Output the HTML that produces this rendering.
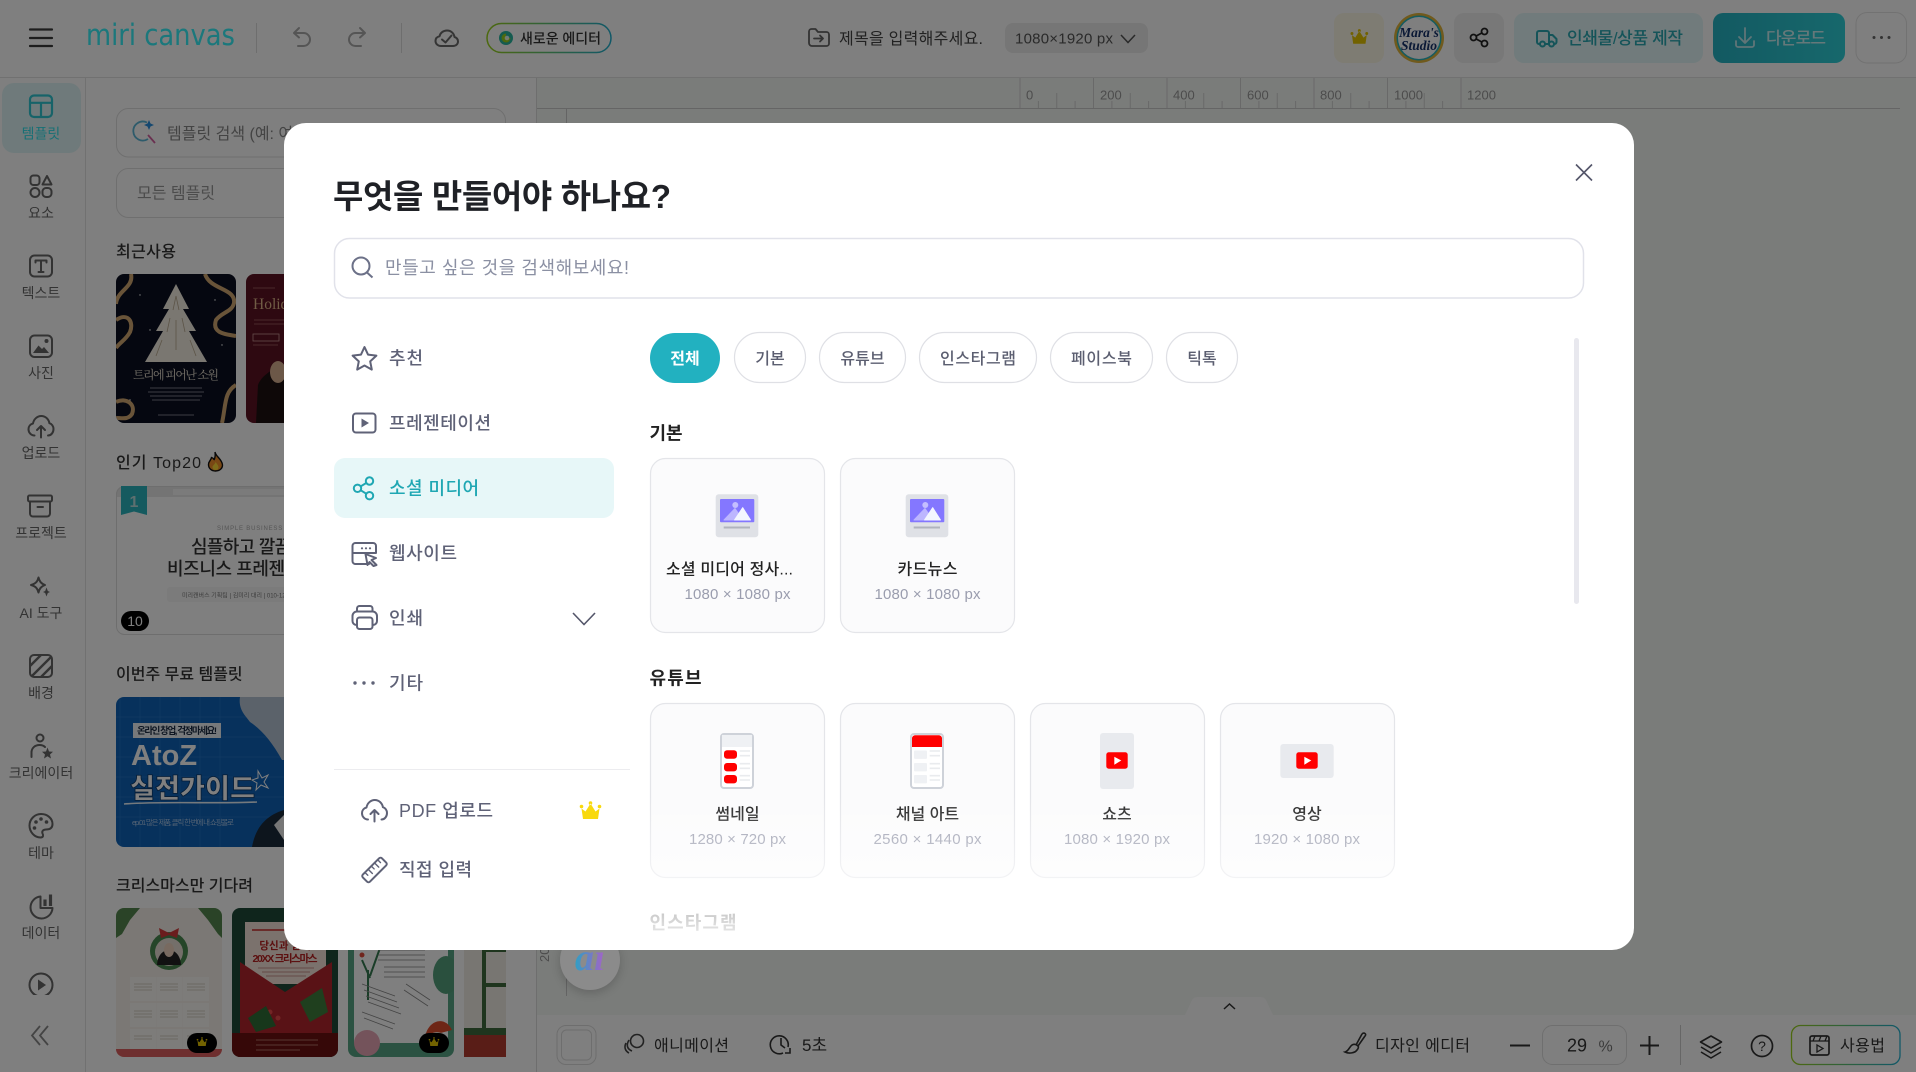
<!DOCTYPE html>
<html lang="ko"><head><meta charset="utf-8"><title>Miri Canvas</title>
<style>
html,body{margin:0;padding:0;background:#808080;overflow:hidden;width:1916px;height:1072px}
svg{display:block}
text{font-family:"Liberation Sans","Noto Sans CJK KR",sans-serif;white-space:pre}
.sl{font-size:14px;fill:#666;text-anchor:middle}
.h{font-size:16px;fill:#333;font-weight:500}
.ic{fill:none;stroke:#666;stroke-width:2;stroke-linecap:round;stroke-linejoin:round}
.m{font-size:18px;fill:#5f6277;font-weight:500}
.mi{fill:none;stroke:#5f6277;stroke-width:2;stroke-linecap:round;stroke-linejoin:round}
.tab{font-size:16px;fill:#5b5e70;text-anchor:middle;font-weight:500}
.sec{font-size:18px;fill:#222;font-weight:700}
.ct{font-size:16px;fill:#222;text-anchor:middle;font-weight:500}
.cs{font-size:15px;fill:#9a9dae;text-anchor:middle}
.card{fill:#fbfbfc;stroke:#e4e5e9;stroke-width:1.2}
.r{font-size:13px;fill:#999}
</style></head><body>
<svg xmlns="http://www.w3.org/2000/svg" width="1916" height="1072" viewBox="0 0 1916 1072">
<defs>
<linearGradient id="gPill" x1="0" x2="1" y1="0" y2="0"><stop offset="0" stop-color="#9ad21e"/><stop offset="1" stop-color="#22b1d0"/></linearGradient>
<linearGradient id="gDl" x1="0" x2="1" y1="0" y2="0"><stop offset="0" stop-color="#26b4c4"/><stop offset="1" stop-color="#2ed0d8"/></linearGradient>
<linearGradient id="gAi" x1="0" x2="1" y1="0" y2="0"><stop offset="0" stop-color="#2f9fc4"/><stop offset="1" stop-color="#a860c8"/></linearGradient>
<linearGradient id="gFade" x1="0" x2="0" y1="0" y2="1"><stop offset="0" stop-color="#fff" stop-opacity="0"/><stop offset=".85" stop-color="#fff" stop-opacity=".85"/><stop offset="1" stop-color="#fff" stop-opacity=".95"/></linearGradient>
<filter id="blurS" x="-30%" y="-30%" width="160%" height="160%"><feGaussianBlur stdDeviation="5"/></filter>
<path id="cloud" d="M6 20.500C2.500 20.500 0 17.500 0 14.200C0 11.300 1.900 9.100 4.500 8.500C5.200 4.300 8.600 1 12.800 1C17 1 20.300 4.200 20.900 8.200C23.300 8.800 25 11.200 25 14C25 17.500 22.700 20.500 19.500 20.500M12.500 22.500V11M8.500 15L12.500 11L16.500 15"/>
<path id="crown" d="M3 7.500L7 10.500L12 2.500L17 10.500L21 7.500L19.500 18H4.500Z M3 5.500m-1.800 0a1.800 1.800 0 1 0 3.600 0a1.800 1.800 0 1 0-3.600 0 M12 2m-1.800 0a1.800 1.800 0 1 0 3.600 0a1.800 1.800 0 1 0-3.600 0 M21 5.500m-1.800 0a1.800 1.800 0 1 0 3.600 0a1.800 1.800 0 1 0-3.600 0"/>
<clipPath id="cT1"><rect x="116" y="274" width="120" height="149" rx="8"/></clipPath>
<clipPath id="cT2"><rect x="246" y="274" width="120" height="149" rx="8"/></clipPath>
<clipPath id="cT3"><rect x="116" y="486" width="300" height="149" rx="8"/></clipPath>
<clipPath id="cT4"><rect x="116" y="697" width="200" height="150" rx="8"/></clipPath>
<clipPath id="cX1"><rect x="116" y="908" width="106" height="149" rx="8"/></clipPath>
<clipPath id="cX2"><rect x="232" y="908" width="106" height="149" rx="8"/></clipPath>
<clipPath id="cX3"><rect x="348" y="908" width="106" height="149" rx="8"/></clipPath>
<clipPath id="cX4"><rect x="464" y="908" width="42" height="149" rx="0"/></clipPath>
<clipPath id="cHat"><rect x="30" y="655" width="22" height="22" rx="4"/></clipPath>
<clipPath id="cSide"><rect x="0" y="78" width="85" height="917"/></clipPath>
<clipPath id="cAi"><rect x="540" y="950" width="120" height="60"/></clipPath>
</defs>

<!-- ===== base ===== -->
<rect width="1916" height="1072" fill="#fff"/>
<rect x="537" y="78" width="1379" height="937" fill="#f5f8f5"/>
<rect x="566" y="108" width="1" height="888" fill="#c8c8c8"/>
<rect y="77" width="1916" height="1" fill="#e2e2e2"/>
<rect x="85" y="78" width="1" height="994" fill="#e2e2e2"/>
<rect x="536" y="78" width="1" height="994" fill="#dcdcdc"/>

<!-- top bar -->
<path d="M30 29.500H52M30 38H52M30 46H52" stroke="#3a3a3a" stroke-width="2.200" stroke-linecap="round" fill="none"/>
<text x="86" y="45" font-size="29" fill="#36f0f8" textLength="149" lengthAdjust="spacingAndGlyphs" style="font-family:'DejaVu Sans',sans-serif;font-weight:400">miri canvas</text>
<rect x="256" y="23" width="1" height="30" fill="#ddd"/>
<path d="M299 28L294 33L299 37.500M294 33H303.500A6.500 6.500 0 0 1 303.500 46H298" fill="none" stroke="#aaa" stroke-width="2" stroke-linecap="round" stroke-linejoin="round"/>
<path d="M360 28L365 33L360 37.500M365 33H355.500A6.500 6.500 0 0 0 355.500 46H361" fill="none" stroke="#aaa" stroke-width="2" stroke-linecap="round" stroke-linejoin="round"/>
<rect x="401" y="23" width="1" height="30" fill="#ddd"/>
<path d="M441 46C437.500 46 435.500 43.500 435.500 41C435.500 38.500 437 36.800 439.500 36.300C440.300 32.800 443.300 30.500 447 30.500C451.200 30.500 454 33.500 454.500 37C456.700 37.700 458 39.200 458 41.500C458 44 456 46 453 46ZM442 39.500L445.500 42.500L451.500 35.500" fill="none" stroke="#6a6a6a" stroke-width="2" stroke-linejoin="round" stroke-linecap="round"/>
<rect x="487" y="23.500" width="124" height="29" rx="14.500" fill="#fff" stroke="url(#gPill)" stroke-width="1.500"/>
<circle cx="506" cy="38" r="7" fill="#2ab7a0"/><path d="M506 33.500A4.500 4.500 0 1 0 510.500 38L506 38Z" fill="#9ad21e"/><circle cx="507" cy="38" r="2.300" fill="#fff" opacity=".85"/>
<text x="520" y="43.500" font-size="14" fill="#333" font-weight="500" textLength="81">새로운 에디터</text>
<path d="M809 43V31.500A2.500 2.500 0 0 1 811.500 29H815.500L818 32H826.500A2.500 2.500 0 0 1 829 34.500V43.500A2.500 2.500 0 0 1 826.500 46H812A3 3 0 0 1 809 43ZM814 38.500H823M820 35.500L823 38.500L820 41.500" fill="none" stroke="#666" stroke-width="1.800" stroke-linecap="round" stroke-linejoin="round"/>
<text x="839" y="44" font-size="16" fill="#444" textLength="144">제목을 입력해주세요.</text>
<rect x="1005" y="23" width="143" height="30" rx="8" fill="#ececec"/>
<text x="1015" y="43.500" font-size="15" fill="#555" textLength="98">1080×1920 px</text>
<path d="M1121 35L1128 42.500L1135 35" fill="none" stroke="#555" stroke-width="1.500"/>
<rect x="1334" y="13" width="50" height="50" rx="10" fill="#fdf8e6"/>
<g fill="#e4c400" transform="translate(1349.500,29) scale(.82)"><use href="#crown"/></g>
<circle cx="1419" cy="38" r="25" fill="#e0b43a"/><circle cx="1419" cy="38" r="22.500" fill="#2bb7c0"/><circle cx="1419" cy="38" r="21" fill="#fff"/>
<text x="1419" y="37" text-anchor="middle" font-size="13.500" font-weight="700" font-style="italic" fill="#14306b" style="font-family:'Liberation Serif',serif">Mara's</text>
<text x="1419" y="50" text-anchor="middle" font-size="13.500" font-weight="700" font-style="italic" fill="#14306b" style="font-family:'Liberation Serif',serif">Studio</text>
<rect x="1454" y="13" width="50" height="50" rx="10" fill="#f0f0f0"/>
<g fill="none" stroke="#222" stroke-width="1.800"><circle cx="1484.500" cy="31.500" r="3"/><circle cx="1473.500" cy="37.500" r="3"/><circle cx="1484.500" cy="43.500" r="3"/><path d="M1476.200 36L1481.800 33M1476.200 39L1481.800 42"/></g>
<rect x="1514" y="13" width="189" height="50" rx="10" fill="#e2f7f8"/>
<path d="M1539.500 44H1539A2 2 0 0 1 1537 42V33A2 2 0 0 1 1539 31H1547A2 2 0 0 1 1549 33V44H1545.500M1549 35H1552.500L1556.500 39V42A2 2 0 0 1 1554.500 44H1554" fill="none" stroke="#2aa8b2" stroke-width="2" stroke-linejoin="round"/>
<circle cx="1542.500" cy="44" r="2.500" fill="none" stroke="#2aa8b2" stroke-width="2"/><circle cx="1551.500" cy="44" r="2.500" fill="none" stroke="#2aa8b2" stroke-width="2"/>
<text x="1567" y="44" font-size="17" font-weight="500" fill="#2aa8b2" textLength="116">인쇄물/상품 제작</text>
<rect x="1713" y="13" width="132" height="50" rx="10" fill="url(#gDl)"/>
<path d="M1745 28V42M1739 37L1745 43L1751 37M1736 41V45A2 2 0 0 0 1738 47H1752A2 2 0 0 0 1754 45V41" fill="none" stroke="#fff" stroke-width="1.800" stroke-linecap="round" stroke-linejoin="round" opacity=".7"/>
<text x="1766" y="44" font-size="17" font-weight="500" fill="#fff" textLength="60" opacity=".75">다운로드</text>
<rect x="1856" y="12.500" width="50.500" height="50.500" rx="11" fill="#fff" stroke="#e5e5e5"/>
<g fill="#666"><circle cx="1874" cy="37.500" r="1.500"/><circle cx="1881.500" cy="37.500" r="1.500"/><circle cx="1889" cy="37.500" r="1.500"/></g>

<!-- ruler -->
<rect x="537" y="108" width="1363" height="1" fill="#cbcbcb"/>
<path d="M1020 78V108M1093.500 78V108M1167 78V108M1240.500 78V108M1314 78V108M1387.500 78V108M1461 78V108M1056.750 93V108M1130.250 93V108M1203.750 93V108M1277.250 93V108M1350.750 93V108M1424.250 93V108M1038.400 101V108M1075.100 101V108M1111.900 101V108M1148.600 101V108M1185.400 101V108M1222.100 101V108M1258.900 101V108M1295.600 101V108M1332.400 101V108M1369.100 101V108M1405.900 101V108M1442.600 101V108" stroke="#d2d2d2" fill="none"/>
<text class="r" x="1026" y="99.500">0</text><text class="r" x="1100" y="99.500">200</text><text class="r" x="1173" y="99.500">400</text><text class="r" x="1247" y="99.500">600</text><text class="r" x="1320" y="99.500">800</text><text class="r" x="1394" y="99.500">1000</text><text class="r" x="1467" y="99.500">1200</text>
<text class="r" transform="translate(549,962) rotate(-90)">200</text>

<!-- sidebar -->
<rect x="2" y="83" width="79" height="70" rx="12" fill="#dff5f6"/>
<g fill="none" stroke="#2ec7d2" stroke-width="2.200" stroke-linejoin="round"><rect x="30" y="95.500" width="22" height="21.500" rx="4"/><path d="M30 102.800H52M41 102.800V117"/></g>
<text class="sl" x="41" y="138.500" style="fill:#30e0ea">템플릿</text>
<g class="ic"><rect x="30.500" y="175.500" width="9" height="9.500" rx="3"/><path d="M47 176L51.500 184.500H42.500Z"/><circle cx="35" cy="192.500" r="4.500"/><rect x="42.500" y="188" width="9" height="9" rx="3.500"/></g>
<text class="sl" x="41" y="218">요소</text>
<g class="ic"><rect x="30" y="255.500" width="22" height="21" rx="4.500"/><path d="M35.500 262.500V260.500H46.500V262.500M41 260.500V272M38.500 272H43.500"/></g>
<text class="sl" x="41" y="298">텍스트</text>
<g class="ic"><rect x="30" y="335.500" width="22" height="21.500" rx="4.500"/></g><path d="M33 353L38.500 345.500L42 349L44 347L49 353Z" fill="#666"/><circle cx="46.500" cy="341" r="2" fill="#666"/>
<text class="sl" x="41" y="378">사진</text>
<g class="ic" transform="translate(28.500,415)"><use href="#cloud"/></g>
<text class="sl" x="41" y="458">업로드</text>
<g class="ic"><rect x="28" y="495.500" width="24" height="6" rx="1.500"/><path d="M30 501.500V513.500A3 3 0 0 0 33 516.500H47A3 3 0 0 0 50 513.500V501.500M37.500 507H43"/></g>
<text class="sl" x="41" y="538">프로젝트</text>
<path class="ic" d="M38.500 577.500C39.500 581.500 41 583.500 45 585C41 586.500 39.500 588.500 38.500 592.500C37.500 588.500 36 586.500 31 585C36 583.500 37.500 581.500 38.500 577.500Z"/>
<path d="M46.500 587.500L47.800 591L50 592L47.800 593L46.500 596.500L45.200 593L43 592L45.200 591Z" fill="#666"/>
<text class="sl" x="41" y="618">AI 도구</text>
<g clip-path="url(#cHat)" stroke="#666" stroke-width="2.400"><path d="M24 672L44 652M28 680L54 654M36 682L58 660M44 686L60 670"/></g>
<rect x="30" y="655" width="22" height="22" rx="4" class="ic"/>
<text class="sl" x="41" y="698">배경</text>
<g class="ic"><circle cx="40" cy="738" r="3.500"/><path d="M31.500 757V752.500C31.500 748 35 745 39.500 745C41.500 745 43.500 745.500 45 747"/></g>
<path d="M47.500 747.500L49 751.500L53 751.800L50 754.500L51 758.500L47.500 756.300L44 758.500L45 754.500L42 751.800L46 751.500Z" fill="#666"/>
<text class="sl" x="41" y="778">크리에이터</text>
<path class="ic" d="M41 814C34.500 814 29.500 819.500 29.500 825.500C29.500 832 34.500 837.500 40.500 837.500C43.500 837.500 43.500 835 42.500 833.500C41.500 831 43.500 829.500 46 829.500C50 829.500 52.500 828 52.500 824C52.500 818.500 47.500 814 41 814Z"/>
<g fill="#666"><circle cx="36" cy="822" r="1.800"/><circle cx="41" cy="819" r="1.800"/><circle cx="46.500" cy="822" r="1.800"/><circle cx="34.500" cy="828" r="1.800"/></g>
<text class="sl" x="41" y="858">테마</text>
<path class="ic" d="M40.500 896.500A11 11 0 1 0 52.500 908H40.500Z"/>
<path d="M45 899.500V906M50.500 894.500V906" stroke="#666" stroke-width="3.200" fill="none"/>
<text class="sl" x="41" y="938">데이터</text>
<g clip-path="url(#cSide)"><circle class="ic" cx="41" cy="985" r="11.500"/><path d="M38 979.500L46 985L38 990.500Z" fill="#666"/></g>
<path d="M40 1026L32 1035.500L40 1045M48 1026L40 1035.500L48 1045" fill="none" stroke="#888" stroke-width="1.800"/>

<!-- left panel -->
<rect x="116.500" y="108.500" width="389" height="48.500" rx="12" fill="#fff" stroke="#dedede"/>
<path d="M147 123.500A9.500 9.500 0 1 0 148 140" fill="none" stroke="#5cb6d6" stroke-width="1.800" transform="translate(0,-1)"/>
<path d="M148 138L155 146" stroke="#d560a0" stroke-width="1.800" transform="translate(0,-3)"/><path d="M149 120L150.500 123.500L154 125L150.500 126.500L149 130L147.500 126.500L144 125L147.500 123.500Z" fill="#2a90e0"/>
<text x="167" y="139" font-size="16" fill="#888">템플릿 검색 (예: 여름)</text>
<rect x="116.500" y="168.500" width="389" height="49" rx="12" fill="#fff" stroke="#dedede"/>
<text x="137" y="198.500" font-size="16" fill="#999">모든 템플릿</text>
<text class="h" x="116" y="257" textLength="60">최근사용</text>
<g clip-path="url(#cT1)"><rect x="116" y="274" width="120" height="149" fill="#0a0e20"/>
<g fill="#fff"><circle cx="140" cy="295" r=".7"/><circle cx="215" cy="300" r=".7"/><circle cx="150" cy="330" r=".7"/><circle cx="222" cy="345" r=".7"/><circle cx="130" cy="400" r=".7"/><circle cx="225" cy="405" r=".7"/></g>
<path d="M176 284L189 309L183 309L196 331L189 331L207 362H145L163 331L156 331L169 309L163 309Z" fill="#f4eee2"/>
<path d="M176 296L173 310M176 296L179 310M170 318L167 332M182 318L185 332M162 340L156 356M190 340L196 356M176 320V350" stroke="#b9a88f" stroke-width=".8" fill="none"/>
<path d="M131 274C134 288 117 290 116 304M116 320C128 312 134 322 130 332C126 340 120 342 116 348M205 274C210 290 236 288 234 303C232 312 222 312 216 320C212 332 222 334 236 336" fill="none" stroke="#d3a872" stroke-width="4"/>
<path d="M222 423C226 405 224 392 236 385M116 402C126 397 136 404 132 414C128 420 122 418 116 418" fill="none" stroke="#d3a872" stroke-width="4"/>
<text x="176" y="379" text-anchor="middle" font-size="12" fill="#e8e0d0" style="font-family:'Noto Serif CJK SC','Noto Sans CJK KR',serif" textLength="86">트리에 피어난 소원</text>
<path d="M150 388H202M148 392H204M150 396H202M152 400H200M158 415H194" stroke="#7a7a86" stroke-width=".9"/></g>
<g clip-path="url(#cT2)"><rect x="246" y="274" width="120" height="149" fill="#5c1222"/>
<text x="253" y="309" font-size="15.500" fill="#e0b88a" style="font-family:'Liberation Serif',serif">Holiday</text>
<path d="M253 288H275M254 320H284M254 324H284M253 345H278" stroke="#a86a6a" stroke-width=".8"/><rect x="253" y="334" width="26" height="7" fill="none" stroke="#c99" stroke-width=".8"/>
<path d="M256 423L258 385C262 372 290 358 300 365V423Z" fill="#1c1010"/><ellipse cx="278" cy="372" rx="8" ry="11" fill="#d8b090"/></g>
<text class="h" x="116" y="468" textLength="85">인기 Top20</text>
<path d="M215 452C216 457 222 459 222.500 465C222.500 469 219 471 215.500 471C211.500 471 208.500 468.500 208.500 464.500C208.500 461 211 460.500 211.500 457.500C213 458 214 459 214 460C215 458 215.500 455 215 452Z" fill="#f3912a" stroke="#111" stroke-width="1.400"/><path d="M215.500 462C217 464 218.500 465.500 218.500 467.500C218.500 469 217 470 215.500 470C213.500 470 212.500 468.500 212.500 467C212.500 465.500 215 464.500 215.500 462Z" fill="#fdd835"/>
<g clip-path="url(#cT3)"><rect x="116" y="486" width="300" height="149" fill="#fff"/><rect x="116" y="486" width="300" height="11" fill="#e8e8e8"/><rect x="173" y="489" width="130" height="6" fill="#f6f6f6"/>
<text x="217" y="530" font-size="6" fill="#aaa" letter-spacing=".8">SIMPLE BUSINESS PRESENTATION</text>
<text x="191" y="553" font-size="18" font-weight="500" fill="#333" letter-spacing="-.7">심플하고 깔끔한</text>
<text x="167" y="575" font-size="18" font-weight="500" fill="#333" letter-spacing="-.4">비즈니스 프레젠테이션</text>
<rect x="167" y="587" width="180" height="15" rx="3" fill="#f6f6f6"/><text x="182" y="597.500" font-size="6" fill="#777">미리캔버스 기획팀 | 김미리 대리 | 010-1234-5678 | kim@miri</text></g>
<rect x="116.500" y="486.500" width="300" height="148" rx="8" fill="none" stroke="#ddd"/>
<path d="M121 486H147V515L134 511.500L121 515Z" fill="#2ab5bf"/><text x="134" y="507" text-anchor="middle" font-size="16" font-weight="700" fill="#bbdede">1</text>
<rect x="121" y="611" width="28" height="20" rx="10" fill="#000"/><text x="135" y="626" text-anchor="middle" font-size="14" fill="#fff">10</text>
<text class="h" x="116" y="679.500">이번주 무료 템플릿</text>
<g clip-path="url(#cT4)"><rect x="116" y="697" width="200" height="150" fill="#0f62b8"/>
<path d="M120 697V847M140 697V847M160 697V847M180 697V847M200 697V847M220 697V847M116 717H316M116 737H316M116 757H316M116 777H316M116 797H316M116 817H316" stroke="#2474c6" stroke-width=".7"/>
<path d="M240 697C238 710 246 716 250 722C262 730 272 742 282 760L300 760V697Z" fill="#b6c4d4"/>
<rect x="133" y="723" width="88" height="15" fill="#eef2f6"/><text x="177" y="734" font-size="9.500" font-weight="700" fill="#1c2c44" text-anchor="middle" textLength="80">온라인 창업, 걱정마세요!</text>
<text x="131" y="765" font-size="29" font-weight="700" fill="#fff">AtoZ</text>
<text x="130" y="798" font-size="27" font-weight="900" fill="#fff" stroke="#0c3a6c" stroke-width=".8" textLength="125" lengthAdjust="spacingAndGlyphs">실전가이드</text>
<path d="M124 804C160 801 220 804 257 802" stroke="#e8f2fa" stroke-width="1.600" fill="none"/>
<text x="132" y="825" font-size="7.500" fill="#a8c6e8" textLength="102">ep.01 많은 제품, 클릭 한 번에 내 쇼핑몰로</text>
<path d="M252 847C256 825 268 815 284 810V847Z" fill="#1b2a3a"/><path d="M274 825L284 815V840Z" fill="#eee"/>
<path d="M258 771L262 778L268 775L264 782L268 788L261 785L256 790L257 783L252 780L258 778Z" fill="none" stroke="#fff"/></g>
<text class="h" x="116" y="891">크리스마스만 기다려</text>
<g clip-path="url(#cX1)"><rect x="116" y="908" width="106" height="149" fill="#f6f1ea"/>
<path d="M116 908H140L130 920L122 934L116 938ZM222 908H198L208 920L218 934L222 938Z" fill="#54874f"/>
<circle cx="169" cy="951" r="19" fill="#4a8a50"/><circle cx="169" cy="952" r="14" fill="#e8dfd4"/><path d="M157 965C158 945 180 945 181 965Z" fill="#222"/><ellipse cx="169" cy="950" rx="5" ry="7" fill="#f0d4c0"/>
<path d="M159 928L169 933L179 928L177 938L169 935L161 938Z" fill="#d43a3a"/>
<g fill="#fbf8f4"><rect x="130" y="977" width="26" height="24"/><rect x="156.500" y="977" width="26" height="24"/><rect x="183" y="977" width="26" height="24"/><rect x="130" y="1003" width="26" height="24"/><rect x="156.500" y="1003" width="26" height="24"/><rect x="183" y="1003" width="26" height="24"/><rect x="130" y="1029" width="26" height="20"/><rect x="156.500" y="1029" width="26" height="20"/><rect x="183" y="1029" width="26" height="20"/></g>
<path d="M134 984H152M134 987H152M134 990H152M160 984H178M160 987H178M160 990H178M187 984H205M187 987H205M187 990H205M134 1011H152M134 1014H152M134 1017H152M160 1011H178M160 1014H178M160 1017H178M187 1011H205M187 1014H205M187 1017H205M134 1036H152M134 1039H152M160 1036H178M160 1039H178M187 1036H205M187 1039H205" stroke="#c8c0b8" stroke-width=".7"/>
<rect x="116" y="1049" width="106" height="8" fill="#dc5f5f"/></g>
<g clip-path="url(#cX2)"><rect x="232" y="908" width="106" height="149" fill="#1f4a38"/>
<rect x="245" y="922" width="81" height="62" fill="#f6e4da"/><path d="M252 930H296" stroke="#c82828" stroke-width="1.600"/>
<text x="285" y="949" text-anchor="middle" font-size="10.500" font-weight="700" fill="#b82020">당신과 함께</text><text x="285" y="962" text-anchor="middle" font-size="10.500" font-weight="700" fill="#b82020" textLength="65">20XX 크리스마스</text>
<path d="M258 968H314M262 972H310M266 976H306" stroke="#bb7777" stroke-width=".8"/>
<path d="M240 962L285 992L332 962V1035H240Z" fill="#b3242c"/><path d="M300 1002L322 988L328 1012L310 1022Z" fill="#3e7e3c"/>
<circle cx="270" cy="1012" r="2.500" fill="#e64a4a"/><circle cx="278" cy="1018" r="2.500" fill="#e64a4a"/><path d="M248 1018L266 1006L276 1026L256 1032Z" fill="#2e6e36"/>
<rect x="232" y="1033" width="106" height="24" fill="#6c1010"/><path d="M256 1040H318M256 1045H318M256 1050H300" stroke="#c89080" stroke-width=".8"/></g>
<g clip-path="url(#cX3)"><rect x="348" y="908" width="106" height="149" fill="#57a585"/><rect x="354" y="915" width="94" height="128" fill="#fff"/>
<path d="M368 1000V970M362 960L370 978M380 948L370 976" stroke="#357a50" stroke-width="2" fill="none"/>
<circle cx="362" cy="955" r="2.500" fill="#e04a3a"/><circle cx="380" cy="944" r="2.500" fill="#e04a3a"/>
<path d="M362 984L395 996M364 990L397 1002M366 996L399 1008M368 1002L401 1014M404 990L428 1006M406 984L430 1000M378 950H425M378 955H425M378 960H425M384 967H425M384 972H425M384 977H425M362 1012L395 1024M364 1018L393 1029" stroke="#888" stroke-width=".8"/>
<ellipse cx="446" cy="975" rx="13" ry="19" fill="#54a07c"/><circle cx="367" cy="1043" r="13" fill="#e9a6b6"/>
<path d="M425 1037C428 1020 445 1015 452 1030Z" fill="#dd4c2c"/><circle cx="437" cy="1042" r="10" fill="#f4e4d4"/></g>
<g clip-path="url(#cX4)"><rect x="464" y="908" width="42" height="149" fill="#f1ece4"/><rect x="482" y="908" width="4" height="125" fill="#3e6a3c"/><path d="M486 950H506M486 985H506" stroke="#3e6a3c" stroke-width="4"/><rect x="464" y="1035" width="42" height="22" fill="#b33a2e"/><rect x="464" y="1028" width="42" height="7" fill="#3e6a3c"/></g>
<rect x="187" y="1033" width="30" height="20" rx="10" fill="#000"/><g fill="#e4c400" transform="translate(196,1037) scale(.5)"><use href="#crown"/></g>
<rect x="419" y="1033" width="30" height="20" rx="10" fill="#000"/><g fill="#e4c400" transform="translate(428,1037) scale(.5)"><use href="#crown"/></g>

<!-- bottom bar -->
<path d="M1185 1015L1192 1000Q1194 997 1198 997H1260Q1264 997 1266 1000L1273 1015Z" fill="#fff"/>
<rect x="537" y="1015" width="1379" height="57" fill="#fff"/>
<path d="M1224 1009L1229.500 1004L1235 1009" fill="none" stroke="#333" stroke-width="1.500"/>
<rect x="557" y="1025.500" width="39" height="39" rx="9" fill="#fff" stroke="#dcdcdc"/><rect x="561.500" y="1030" width="30" height="30" rx="5" fill="none" stroke="#dcdcdc"/>
<g fill="none" stroke="#444" stroke-width="1.600"><circle cx="637" cy="1041" r="6.500"/><path d="M629 1040C626 1045 627 1049 632 1051M626 1043C624 1047 625 1051 629 1053"/></g>
<text x="654" y="1051" font-size="16" fill="#333" textLength="75">애니메이션</text>
<path d="M788 1047A9 9 0 1 0 783 1053M781 1038V1045L785 1048M785 1053H790V1048" fill="none" stroke="#333" stroke-width="1.600"/>
<text x="802" y="1051" font-size="17" fill="#333">5초</text>
<path d="M1362 1034L1356 1045M1365 1036L1358 1046C1356 1044 1354 1044 1352 1045C1349 1047 1349 1051 1345 1052C1349 1054 1355 1053 1357 1050C1358 1049 1359 1047 1358 1046M1362 1034C1364 1032 1367 1034 1365 1036" fill="none" stroke="#333" stroke-width="1.600"/>
<text x="1375" y="1051" font-size="16" fill="#333" textLength="95">디자인 에디터</text>
<path d="M1510 1045.500H1530M1640 1045.500H1659M1649.500 1036V1055" stroke="#333" stroke-width="2" fill="none"/>
<rect x="1542.500" y="1025.500" width="84" height="39" rx="10" fill="#fff" stroke="#dedede"/>
<text x="1567" y="1051.500" font-size="18" fill="#333">29</text><text x="1598.500" y="1051.500" font-size="16" fill="#777">%</text>
<rect x="1680" y="1025" width="1" height="40" fill="#ccc"/>
<path d="M1711 1036L1700.500 1042L1711 1048L1721.500 1042ZM1701 1047L1711 1053L1721 1047M1701 1052L1711 1058L1721 1052" fill="none" stroke="#333" stroke-width="1.600" stroke-linejoin="round"/>
<circle cx="1762" cy="1046" r="10.500" fill="none" stroke="#333" stroke-width="1.700"/>
<text x="1762" y="1051" font-size="14" fill="#333" text-anchor="middle">?</text>
<rect x="1791.500" y="1025.500" width="108.500" height="39" rx="9" fill="#fff" stroke="url(#gPill)" stroke-width="1.300"/>
<rect x="1810" y="1036" width="19" height="19" rx="2" fill="none" stroke="#333" stroke-width="1.700"/><path d="M1810 1041H1829M1815 1036L1813 1041M1821 1036L1819 1041M1827 1036L1825 1041M1817 1045V1052L1823 1048.500Z" fill="none" stroke="#333" stroke-width="1.300"/>
<text x="1840" y="1051" font-size="16" fill="#333" textLength="45">사용법</text>

<!-- dim -->
<rect width="1916" height="1072" fill="#000" opacity=".5"/>

<!-- ai button (already dimmed colours) -->
<circle cx="590" cy="963" r="30" fill="#000" opacity=".18" filter="url(#blurS)"/>
<circle cx="590" cy="960" r="30" fill="#8b8b8b"/>
<text x="575" y="970" font-size="38" font-weight="700" font-style="italic" fill="url(#gAi)" style="font-family:'Liberation Serif',serif">ai</text>

<!-- ===== modal ===== -->
<rect x="284" y="123" width="1350" height="827" rx="22" fill="#fff"/>
<path d="M1576 164.500L1592 180.500M1592 164.500L1576 180.500" stroke="#54566a" stroke-width="1.600"/>
<text x="333" y="208" font-size="33" font-weight="700" fill="#1f2126" textLength="338">무엇을 만들어야 하나요?</text>
<rect x="334.500" y="238.500" width="1249" height="59.500" rx="15" fill="#fff" stroke="#e1e2ea" stroke-width="1.500"/>
<circle cx="361" cy="266" r="8.500" fill="none" stroke="#6c7188" stroke-width="2"/><path d="M367 272.500L372.500 277.500" stroke="#6c7188" stroke-width="2"/>
<text x="385" y="274" font-size="18" fill="#8b90a3" textLength="244">만들고 싶은 것을 검색해보세요!</text>

<!-- menu -->
<path class="mi" d="M364.500 347L368 354.600L376.400 355.600L370.200 361.400L371.800 369.600L364.500 365.500L357.200 369.600L358.800 361.400L352.600 355.600L361 354.600Z"/>
<text class="m" x="389" y="364.500" textLength="34">추천</text>
<rect class="mi" x="353" y="413.500" width="22.500" height="19" rx="3"/><path d="M361.500 418.500L369 423L361.500 427.500Z" fill="#5f6277"/>
<text class="m" x="389" y="429.500" textLength="102">프레젠테이션</text>
<rect x="334" y="458" width="280" height="60" rx="11" fill="#e7f7f8"/>
<g fill="none" stroke="#1fa7b3" stroke-width="2"><circle cx="369.500" cy="481" r="3.700"/><circle cx="357.500" cy="488.300" r="3.700"/><circle cx="369.500" cy="495.700" r="3.700"/><path d="M360.800 486.300L366.200 483M360.800 490.300L366.200 493.700"/></g>
<text x="389" y="494.500" font-size="18" fill="#1fa7b3" font-weight="500" textLength="90">소셜 미디어</text>
<path class="mi" d="M369 564H355A3 3 0 0 1 352.500 561V546A3 3 0 0 1 355.500 543H373A3 3 0 0 1 376 546V553M352.500 553H376"/>
<g fill="#5f6277"><circle cx="362" cy="548.300" r="1.100"/><circle cx="366" cy="548.300" r="1.100"/><circle cx="370" cy="548.300" r="1.100"/></g>
<path class="mi" d="M365.500 554L376 558L371.500 560L376.500 565L373.500 566L369.500 562L367.500 565Z" stroke-width="1.600"/>
<text class="m" x="389" y="559.500" textLength="68">웹사이트</text>
<path class="mi" d="M357 611.500V608.500A2.500 2.500 0 0 1 359.500 606H370A2.500 2.500 0 0 1 372.500 608.500V611.500M357 625H356.500A4 4 0 0 1 352.500 621V616A4.500 4.500 0 0 1 357 611.500H372.500A4.500 4.500 0 0 1 377 616V621A4 4 0 0 1 373 625H372.500"/>
<rect class="mi" x="357" y="617.500" width="15.500" height="11.500" rx="2.500"/>
<text class="m" x="389" y="624.500" textLength="34">인쇄</text>
<path d="M573 613L584 624.500L595 613" fill="none" stroke="#54566a" stroke-width="1.600"/>
<g fill="#5f6277"><circle cx="355" cy="683" r="1.700"/><circle cx="364" cy="683" r="1.700"/><circle cx="373" cy="683" r="1.700"/></g>
<text class="m" x="389" y="689.500" textLength="34">기타</text>
<rect x="334" y="769" width="296" height="1" fill="#ececef"/>
<g class="mi" transform="translate(362,799)"><use href="#cloud"/></g>
<text class="m" x="399" y="817" textLength="94">PDF 업로드</text>
<g fill="#f8d90f" transform="translate(578.500,801)"><use href="#crown"/></g>
<g class="mi" transform="rotate(-45 374.500 870)"><rect x="361" y="865" width="27" height="10" rx="2"/><path d="M366 865V869M370.500 865V871M375 865V869M379.500 865V871M384 865V869" stroke-width="1.400"/></g>
<text class="m" x="399" y="876" textLength="73">직접 입력</text>

<!-- tabs -->
<rect x="650" y="333" width="70" height="50" rx="25" fill="#22b1c0"/>
<text x="685" y="364" text-anchor="middle" font-size="16" font-weight="700" fill="#fff">전체</text>
<g fill="#fff" stroke="#dfe0e5" stroke-width="1.200"><rect x="734.500" y="332.500" width="71" height="50" rx="25"/><rect x="819.500" y="332.500" width="86" height="50" rx="25"/><rect x="919.500" y="332.500" width="117" height="50" rx="25"/><rect x="1050.500" y="332.500" width="102" height="50" rx="25"/><rect x="1166.500" y="332.500" width="71" height="50" rx="25"/></g>
<text class="tab" x="770" y="364">기본</text><text class="tab" x="862.500" y="364">유튜브</text><text class="tab" x="978" y="364" textLength="76">인스타그램</text><text class="tab" x="1101.500" y="364" textLength="61">페이스북</text><text class="tab" x="1202" y="364">틱톡</text>
<rect x="1574" y="338" width="5" height="266" rx="2.500" fill="#e8e8ee"/>

<!-- 기본 -->
<text class="sec" x="649.500" y="439.500">기본</text>
<rect class="card" x="650.500" y="458.500" width="174" height="174" rx="15"/><rect class="card" x="840.500" y="458.500" width="174" height="174" rx="15"/>
<g id="imgIc"><rect x="715.700" y="494.300" width="42.600" height="43" rx="3" fill="#dfe1e6"/><rect x="720" y="499" width="34.300" height="23.300" rx="1" fill="#8477ff"/><circle cx="735.300" cy="505" r="3" fill="#c4beff"/><path d="M724 520L735 508.500L743 520Z" fill="#bdb6ff" stroke="#bdb6ff" stroke-linejoin="round"/><path d="M734.500 520L742.700 507.700L750.500 520Z" fill="#f4f6ff" stroke="#f4f6ff" stroke-linejoin="round"/><rect x="723.700" y="526.500" width="26.300" height="2" fill="#b0b4bd"/></g>
<use href="#imgIc" x="190"/>
<text class="ct" x="729.500" y="574.500" textLength="127">소셜 미디어 정사...</text><text class="cs" x="737.500" y="599" textLength="106">1080 × 1080 px</text>
<text class="ct" x="927.500" y="574.500" textLength="60">카드뉴스</text><text class="cs" x="927.500" y="599" textLength="106">1080 × 1080 px</text>

<!-- 유튜브 -->
<text class="sec" x="649.500" y="684.500" textLength="52">유튜브</text>
<rect class="card" x="650.500" y="703.500" width="174" height="174" rx="15"/><rect class="card" x="840.500" y="703.500" width="174" height="174" rx="15"/><rect class="card" x="1030.500" y="703.500" width="174" height="174" rx="15"/><rect class="card" x="1220.500" y="703.500" width="174" height="174" rx="15"/>
<!-- thumbnail icon -->
<rect x="721" y="734" width="32" height="54" rx="3" fill="#fff" stroke="#ced2d9" stroke-width="2"/><rect x="722" y="735" width="30" height="12" fill="#eff1f4"/>
<g fill="#f00"><rect x="724" y="750.300" width="13" height="8.400" rx="3"/><rect x="724" y="763" width="13" height="8.400" rx="3"/><rect x="724" y="775" width="13" height="8.400" rx="3"/></g>
<path d="M739.700 751H750M739.700 755.700H750M739.700 763.700H750M739.700 768.300H750M739.700 775.700H750M739.700 780H750" stroke="#e9ebee" stroke-width="1.600"/>
<!-- channel art -->
<rect x="911" y="734" width="32" height="54" rx="3" fill="#fff" stroke="#ced2d9" stroke-width="2"/><path d="M912 738A3 3 0 0 1 915 735.300H939A3 3 0 0 1 942 738V747H912Z" fill="#f00"/>
<g fill="#eff1f4"><rect x="914" y="750.500" width="13" height="8.400" rx="1"/><rect x="914" y="763" width="13" height="8.400" rx="1"/><rect x="914" y="775" width="13" height="8.400" rx="1"/></g>
<path d="M929.700 751H940M929.700 755.700H940M929.700 763.700H940M929.700 768.300H940M929.700 775.700H940M929.700 780H940" stroke="#e9ebee" stroke-width="1.600"/>
<!-- shorts -->
<rect x="1100" y="733" width="34" height="56" rx="3" fill="#e8eaee"/><rect x="1106.300" y="752.300" width="21.400" height="16.400" rx="2.500" fill="#f00"/><path d="M1114.300 756.700L1121.300 760.500L1114.300 764.700Z" fill="#fff"/>
<!-- video -->
<rect x="1280.300" y="744" width="53.400" height="34" rx="3" fill="#e8eaee"/><rect x="1296.300" y="752.300" width="21.400" height="16.400" rx="2.500" fill="#f00"/><path d="M1304.300 756.700L1311.300 760.500L1304.300 764.700Z" fill="#fff"/>
<text class="ct" x="737.500" y="819.500">썸네일</text><text class="cs" x="737.500" y="844" textLength="97">1280 × 720 px</text>
<text class="ct" x="927.500" y="819.500">채널 아트</text><text class="cs" x="927.500" y="844" textLength="108">2560 × 1440 px</text>
<text class="ct" x="1117" y="819.500">쇼츠</text><text class="cs" x="1117" y="844" textLength="106">1080 × 1920 px</text>
<text class="ct" x="1307" y="819.500">영상</text><text class="cs" x="1307" y="844" textLength="106">1920 × 1080 px</text>
<text class="sec" x="649.500" y="929" textLength="87" font-weight="500">인스타그램</text>
<rect x="640" y="795" width="950" height="155" fill="url(#gFade)"/>
</svg>
</body></html>
